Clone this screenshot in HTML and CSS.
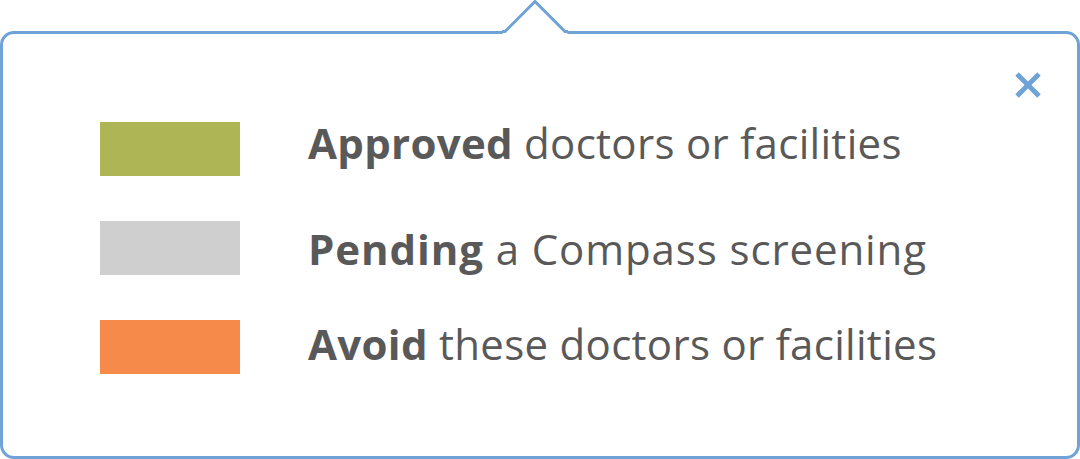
FILE: index.html
```html
<!DOCTYPE html>
<html lang="en">
<head>
<meta charset="utf-8">
<title>Legend</title>
<link rel="stylesheet" href="styles.css">
</head>
<body>
<div class="popover">
  <svg class="notch" width="66" height="34" viewBox="0 0 66 34" aria-hidden="true">
    <polygon points="0,34 3,31.5 33,1.5 63,31.5 66,34" fill="#ffffff"/>
    <polyline points="0,31.5 3,31.5 33,1.5 63,31.5 66,31.5" fill="none" stroke="#6fa3d8" stroke-width="3"/>
  </svg>
  <div class="box">
    <button class="close" aria-label="Close">
      <svg width="28" height="28" viewBox="0 0 28 28" aria-hidden="true">
        <line x1="3" y1="3" x2="25" y2="25" stroke="#6fa3d8" stroke-width="5"/>
        <line x1="25" y1="3" x2="3" y2="25" stroke="#6fa3d8" stroke-width="5"/>
      </svg>
    </button>
    <ul class="legend">
      <li class="row"><span class="swatch green"></span><span class="label label-approved"><b>Approved</b> doctors or facilities</span></li>
      <li class="row row-pending"><span class="swatch gray"></span><span class="label label-pending"><b>Pending</b> a Compass screening</span></li>
      <li class="row"><span class="swatch orange"></span><span class="label label-avoid"><b>Avoid</b> these doctors or facilities</span></li>
    </ul>
  </div>
</div>
</body>
</html>
```
FILE: styles.css
```css
html, body {
  margin: 0;
  padding: 0;
  background: #ffffff;
}
body {
  width: 1080px;
  height: 459px;
  overflow: hidden;
  font-family: "Open Sans", "Noto Sans", sans-serif;
}
.popover {
  position: relative;
  box-sizing: border-box;
  width: 1080px;
  height: 459px;
  padding-top: 31px;
}
.notch {
  position: absolute;
  left: 502px;
  top: 0;
  z-index: 2;
}
.box {
  position: relative;
  box-sizing: border-box;
  height: 428px;
  border: 3px solid #6fa3d8;
  border-radius: 14px;
  padding: 88px 0 0 97px;
}
.close {
  position: absolute;
  top: 37px;
  right: 35px;
  width: 28px;
  height: 28px;
  padding: 0;
  border: 0;
  background: none;
  display: flex;
}
.legend {
  list-style: none;
  margin: 0;
  padding: 0;
  display: flex;
  flex-direction: column;
  gap: 45px;
}
.row {
  display: flex;
  align-items: center;
  gap: 68px;
  height: 54px;
}
.swatch {
  flex: none;
  width: 140px;
  height: 54px;
}
.green { background: #adb554; }
.gray { background: #cfcfcf; }
.orange { background: #f58a4b; }
.label {
  font-size: 42px;
  color: #595959;
  font-weight: 400;
  line-height: 1;
  letter-spacing: 0.3px;
  white-space: nowrap;
}
.label b {
  font-weight: 700;
}
.label-approved { margin-bottom: 12px; }
.label-pending { margin-top: 1px; letter-spacing: 0.9px; }
.label-avoid { margin-bottom: 7px; }
```
